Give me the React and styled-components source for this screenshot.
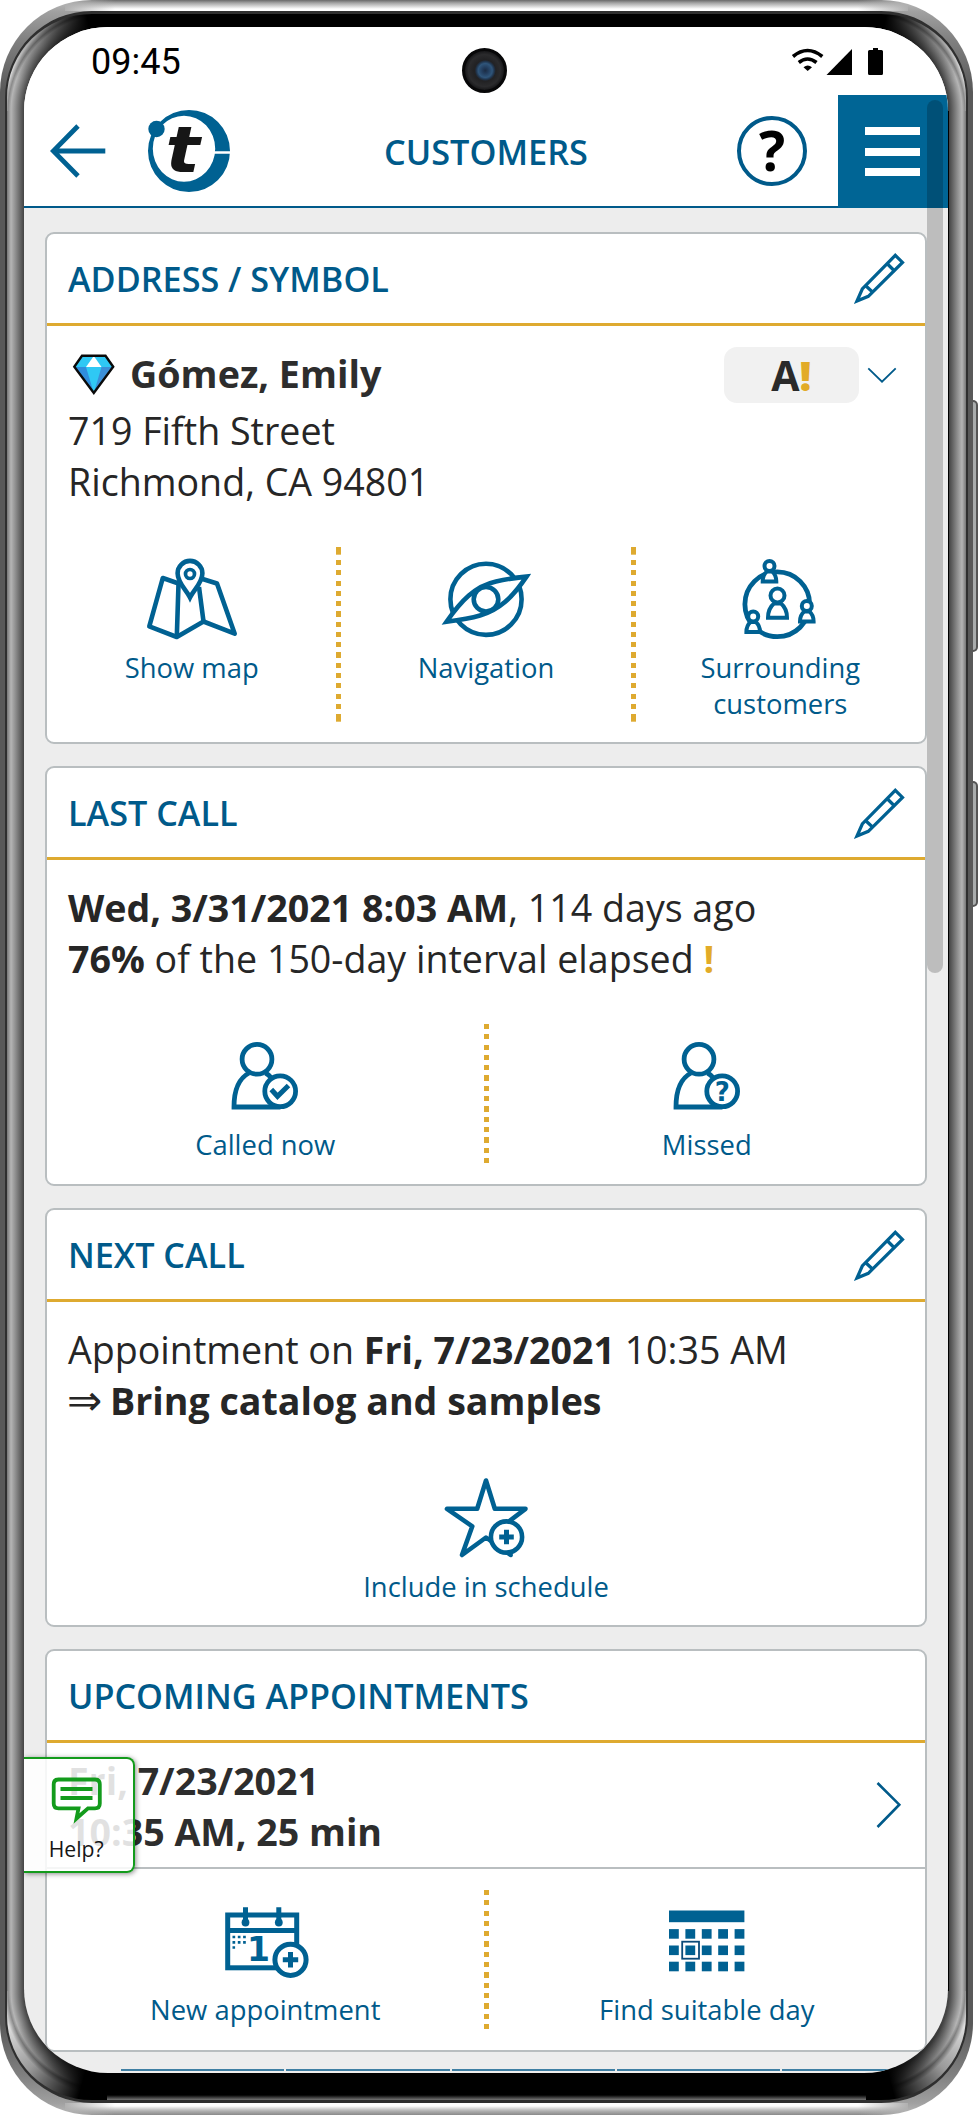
import React from "react";
import styled, { createGlobalStyle, css } from "styled-components";

const BLUE = "#006192";
const TEXT_BLUE = "#005a8a";
const GOLD = "#deaa30";
const GREY = "#b9bec0";

const Pencil = () => (
  <svg width="52" height="54" viewBox="854 252 52 54" fill="none" stroke={BLUE} strokeWidth="3.2">
    <path d="M857 302 862.3 290 895.3 256.3 902.5 263.4 868.3 297.3Z" />
    <path d="M887 264.5 895 272.5M865.5 286.5 873 293.5" />
  </svg>
);

const ShowMapIcon = () => (
  <svg width="92" height="82" viewBox="146 557 92 82" fill="none" stroke={BLUE} strokeWidth="4.6" strokeLinejoin="round">
    <path d="M180 583 162.8 577 149.3 625.3 176.8 636 203.5 620.5 234.7 632.7 217 582.5 201 577.5" />
    <path d="M178.5 583 176.8 636M199 586 203.5 620.5" />
    <path
      d="M190 596.5C186 588.5 177.6 582 177.6 572.3A12.4 12.4 0 0 1 202.4 572.3C202.4 582 194 588.5 190 596.5Z"
      fill="#fff"
      strokeLinejoin="miter"
    />
    <circle cx="190" cy="573" r="4.5" strokeWidth="3.7" />
  </svg>
);

const NavigationIcon = () => (
  <svg width="92" height="82" viewBox="440 557 92 82" fill="none" stroke={BLUE} strokeWidth="4.6">
    <circle cx="486" cy="598.3" r="35.6" />
    <path
      d="M446.5 620.8C461 600 475 585 496 580.5 507 578 517 576.6 526.5 575.6 512 597 499 609 480 614.5 469 617.7 457 619.4 446.5 620.8Z"
      fill="#fff"
    />
    <circle cx="486" cy="598.3" r="12.3" />
  </svg>
);

const SmallPerson = ({ x, y }) => (
  <g transform={`translate(${x} ${y})`}>
    <path d="M-6.8 15.5C-6.8 10-5 7.5-2.5 5.5H2.5C5 7.5 6.8 10 6.8 15.5Z" fill="#fff" />
    <circle r="5" fill="#fff" />
  </g>
);

const SurroundingIcon = () => (
  <svg width="92" height="82" viewBox="734 557 92 82" fill="none" stroke={BLUE} strokeWidth="4">
    <circle cx="777.3" cy="603.3" r="32.4" strokeWidth="4.8" />
    <path d="M768 616.7C768 609 771 605 774 602.5H781C784 605 787 609 787 616.7Z" />
    <circle cx="777.5" cy="594.5" r="7" fill="#fff" />
    <SmallPerson x={769.5} y={565} />
    <SmallPerson x={806.8} y={605} />
    <SmallPerson x={753.2} y={615.5} />
  </svg>
);

const CallIcon = ({ missed }) => (
  <svg width="70" height="70" viewBox="230.5 1041 70 70" fill="none" stroke={BLUE} strokeWidth="4.8">
    <path d="M281 1107H234.5C234.5 1090 240 1078 249.5 1073M266 1073C269 1074.5 271 1076.5 273 1079" />
    <circle cx="257.5" cy="1059.3" r="14.9" />
    <circle cx="280.7" cy="1091.3" r="15.4" fill="#fff" />
    {missed ? (
      <BadgeText x="280.7" y="1101" fontSize="26">?</BadgeText>
    ) : (
      <path d="M271.8 1089.5 278 1096.3 289 1085.5" strokeWidth="5" />
    )}
  </svg>
);

const StarIcon = () => (
  <svg width="86" height="82" viewBox="443 1477 86 82" fill="none" stroke={BLUE} strokeWidth="4.6" strokeLinejoin="round">
    <path d="M486 1480.5 494.8 1508.8H525.5L501 1527.5 510.6 1555 486 1537.5 462 1555 472.3 1526.3 447 1508.8H477.2Z" />
    <circle cx="506.5" cy="1537" r="15.6" fill="#fff" />
    <path d="M499.2 1537H513.8M506.5 1529.7V1544.3" strokeWidth="5" />
  </svg>
);

const NewAppointmentIcon = () => (
  <svg width="88" height="72" viewBox="221.5 1907.5 88 72" fill="none" stroke={BLUE} strokeWidth="5">
    <rect x="228.2" y="1915.5" width="69" height="52.8" />
    <path d="M228 1931H297M246 1907.7V1922M279.3 1907.7V1922" />
    <circle cx="246" cy="1923" r="3.9" fill={BLUE} stroke="none" />
    <circle cx="279.3" cy="1923" r="3.9" fill={BLUE} stroke="none" />
    <path d="M233 1937.5H246.5M233 1942.8H246.5M233 1948H235.6" strokeWidth="2.7" strokeDasharray="2.7 2.6" />
    <BadgeText x="259" y="1961.7" fontSize="33">1</BadgeText>
    <circle cx="291" cy="1960.3" r="15.6" fill="#fff" />
    <path d="M283.3 1960.3H298.7M291 1952.6V1968" />
  </svg>
);

const FindDayIcon = () => (
  <svg width="76" height="72" viewBox="669 1907.5 76 72" fill={BLUE}>
    <rect x="669" y="1911" width="75.4" height="11.7" />
    {[1929.6, 1946, 1962.2].map((y) =>
      [669, 685.4, 701.8, 718.2, 734.6].map((x) => <rect key={`${x}-${y}`} x={x} y={y} width="9.8" height="9.6" />)
    )}
    <rect x="682.2" y="1942.2" width="16.8" height="17" fill="none" stroke="#fff" strokeWidth="4" />
    <rect x="682.2" y="1942.2" width="16.8" height="17" fill="none" stroke="#0b4a78" strokeWidth="1.8" />
  </svg>
);

const Diamond = () => (
  <svg width="44" height="42" viewBox="72.5 353 44 42">
    <path d="M83 354.3H106L114 365.7 94.3 392.5 74.5 365.7Z" fill="#2fc8f4" />
    <path d="M74.5 366H86.5L94.3 392Z" fill="#2f8ddd" />
    <path d="M102 366H114L94.3 392Z" fill="#3b8fd8" />
    <path d="M94.3 355 86.5 366H102Z" fill="#fff" />
    <path d="M82.5 354.8H106L113.7 365.7 94.3 392 74.8 365.7Z" fill="none" stroke="#0a0a0a" strokeWidth="2.4" />
  </svg>
);

const Logo = () => (
  <svg width="84" height="84" viewBox="147 109 84 84">
    <path
      d="M189 110A41 41 0 1 0 189 192 41 41 0 1 0 189 110ZM184 115.7A31.2 33 0 1 1 184 181.7 31.2 33 0 1 1 184 115.7Z"
      fill={BLUE}
      fillRule="evenodd"
    />
    <path d="M214 152.5H231" stroke="#fff" strokeWidth="2.6" />
    <circle cx="156.5" cy="129" r="8.2" fill={BLUE} />
    <LogoText transform="translate(165.5 171.5) scale(1.16 1.02)">t</LogoText>
  </svg>
);

const StatusIcons = () => (
  <svg width="94" height="30" viewBox="791 47 94 30">
    <path d="M793 56.5Q807.5 44.5 822.3 56.5M798.8 62.5Q807.5 55.5 816.5 62.5" fill="none" stroke="#000" strokeWidth="3.6" />
    <path d="M803.5 67.3Q807.7 63.5 812 67.3L807.7 71Z" />
    <path d="M826.5 75 852 49V75Z" />
    <path d="M873 48H878V50H881.5Q883 50 883 51.5V73.5Q883 75 881.5 75H869.5Q868 75 868 73.5V51.5Q868 50 869.5 50H873Z" />
  </svg>
);

const Action = ({ icon, children }) => (
  <ActionButton>
    {icon}
    <span>{children}</span>
  </ActionButton>
);

const CardHead = ({ title, editable = true }) => (
  <CardHeader>
    <CardTitle>{title}</CardTitle>
    {editable && <Pencil />}
  </CardHeader>
);

const App = () => {
  return (
    <Page>
      <GlobalStyle />
      <Frame>
        <Bezel>
          <Screen>
            <StatusBar>
              <Clock>09:45</Clock>
              <StatusIcons />
              <Camera />
            </StatusBar>
            <Toolbar>
              <ToolbarLeft>
                <svg width="56" height="54" viewBox="50 123.5 56 54" fill="none" stroke={BLUE} strokeWidth="4.8">
                  <path d="M105.3 150.5H53M78 125.5 53.3 150.5 78 175.5" />
                </svg>
                <Logo />
              </ToolbarLeft>
              <PageTitle>CUSTOMERS</PageTitle>
              <ToolbarRight>
                <HelpCircle>?</HelpCircle>
                <MenuButton>
                  <i />
                  <i />
                  <i />
                </MenuButton>
              </ToolbarRight>
            </Toolbar>

            <Content>
              <Card>
                <CardHead title="ADDRESS / SYMBOL" />
                <NameRow>
                  <Diamond />
                  <Name>Gómez, Emily</Name>
                  <Rating>
                    A<Mark>!</Mark>
                  </Rating>
                  <svg width="30" height="16" viewBox="867 367 30 16" fill="none" stroke={TEXT_BLUE} strokeWidth="1.8">
                    <path d="M868.3 368.3 882 381.7 895.7 368.3" />
                  </svg>
                </NameRow>
                <CardText $top={1}>
                  719 Fifth Street
                  <br />
                  Richmond, CA 94801
                </CardText>
                <Actions $top={40} $gap={10}>
                  <Action icon={<ShowMapIcon />}>Show map</Action>
                  <Divider $tall />
                  <Action icon={<NavigationIcon />}>Navigation</Action>
                  <Divider $tall />
                  <Action icon={<SurroundingIcon />}>
                    Surrounding
                    <br />
                    customers
                  </Action>
                </Actions>
              </Card>

              <Card>
                <CardHead title="LAST CALL" />
                <CardText $top={21.5}>
                  <b>Wed, 3/31/2021 8:03 AM</b>, 114 days ago
                  <br />
                  <b>76%</b> of the 150-day interval elapsed <Mark>!</Mark>
                </CardText>
                <Actions $top={39.5} $pad={17} $gap={16.5}>
                  <Action icon={<CallIcon />}>Called now</Action>
                  <Divider />
                  <Action icon={<CallIcon missed />}>Missed</Action>
                </Actions>
              </Card>

              <Card>
                <CardHead title="NEXT CALL" />
                <CardText $top={21.3}>
                  Appointment on <b>Fri, 7/23/2021</b> 10:35 AM
                  <br />
                  <Implies>⇒</Implies> <b>Bring catalog and samples</b>
                </CardText>
                <Actions $top={39.7} $gap={10}>
                  <Action icon={<StarIcon />}>Include in schedule</Action>
                </Actions>
              </Card>

              <Card>
                <CardHead title="UPCOMING APPOINTMENTS" editable={false} />
                <AppointmentRow>
                  <b>
                    Fri, 7/23/2021
                    <br />
                    10:35 AM, 25 min
                  </b>
                  <svg width="26" height="48" viewBox="877 1781.5 26 48" fill="none" stroke={TEXT_BLUE} strokeWidth="2.6">
                    <path d="M878.5 1783.5 900.3 1805.2 878.5 1827.5" />
                  </svg>
                </AppointmentRow>
                <Actions $top={21} $pad={17} $gap={12.5}>
                  <Action icon={<NewAppointmentIcon />}>New appointment</Action>
                  <Divider />
                  <Action icon={<FindDayIcon />}>Find suitable day</Action>
                </Actions>
              </Card>

              <TabStrip>
                <i />
                <i />
                <i />
                <i />
                <i />
              </TabStrip>
            </Content>

            <HelpTab>
              <svg width="52" height="47" viewBox="50.5 1778 52 47" fill="none" stroke="#139b1c" strokeWidth="3.8">
                <path d="M59 1780.5H95.5Q100.3 1780.5 100.3 1785.3V1804.5Q100.3 1809.3 95.5 1809.3H88.5L77 1819.5 79 1809.3H59Q54.2 1809.3 54.2 1804.5V1785.3Q54.2 1780.5 59 1780.5Z" />
                <path d="M61 1790H93M61 1799H93" />
              </svg>
              Help?
            </HelpTab>
            <Scrollbar />
          </Screen>
        </Bezel>
      </Frame>
      <SideButtons>
        <SideButton $height={252} />
        <SideButton $height={126} />
      </SideButtons>
    </Page>
  );
};

export default App;

const GlobalStyle = createGlobalStyle`
  *, *::before, *::after {
    box-sizing: border-box;
  }

  body {
    margin: 0;
    background: #fff;
    font-family: "Open Sans", sans-serif;
  }

  svg {
    display: block;
    flex: none;
  }
`;

const Page = styled.div`
  display: flex;
  width: 978px;
  height: 2115px;
  overflow: hidden;
`;

/* polished metal edge of the phone */
const Frame = styled.div`
  width: 973px;
  height: 2115px;
  padding: 11px 5px 12px;
  border-radius: 92px;
  background:
    linear-gradient(90deg, #b0b0b0, rgba(176, 176, 176, 0)) 65px 0 / 50px 11px no-repeat,
    linear-gradient(270deg, #b0b0b0, rgba(176, 176, 176, 0)) calc(100% - 65px) 0 / 50px 11px no-repeat,
    linear-gradient(90deg, #b0b0b0, rgba(176, 176, 176, 0)) 65px 100% / 50px 12px no-repeat,
    linear-gradient(270deg, #b0b0b0, rgba(176, 176, 176, 0)) calc(100% - 65px) 100% / 50px 12px no-repeat,
    linear-gradient(#6a6a6a, #a5a5a5 3px, #fff 9px, #fff 11px) 50% 0 / calc(100% - 130px) 11px no-repeat,
    linear-gradient(#fff, #fff 3px, #b0b0b0 8px, #8a8a8a 12px) 50% 100% / calc(100% - 130px) 12px no-repeat,
    linear-gradient(#bbb 0, #a0a0a0 12px, #808080 40px, #595959 90px, #595959 calc(100% - 90px), #808080 calc(100% - 40px), #a0a0a0 calc(100% - 12px), #bbb);
`;

const Bezel = styled.div`
  height: 100%;
  padding: 13px 17px 25px;
  border: solid #2f2f2f;
  border-width: 3px 2px;
  border-radius: 87px;
  background:
    conic-gradient(from 270deg at 100% 100%, transparent 20deg, rgba(0, 0, 0, 0.3) 45deg, #000 78deg) 0 0 / 100px 97px no-repeat,
    conic-gradient(from 0deg at 0 100%, #000 12deg, rgba(0, 0, 0, 0.3) 45deg, transparent 70deg) 100% 0 / 100px 97px no-repeat,
    conic-gradient(from 180deg at 100% 0, #000 15deg, rgba(0, 0, 0, 0.3) 45deg, transparent 70deg) 0 100% / 100px 109px no-repeat,
    conic-gradient(from 90deg at 0 0, transparent 20deg, rgba(0, 0, 0, 0.3) 45deg, #000 75deg) 100% 100% / 100px 109px no-repeat,
    radial-gradient(circle at 100% 100%, #444 83px, #8a8a8a 91px, #b5b5b5 96px, #8a8a8a 99px, #ddd 103px) 0 0 / 100px 97px no-repeat,
    radial-gradient(circle at 0 100%, #444 83px, #8a8a8a 91px, #b5b5b5 96px, #8a8a8a 99px, #ddd 103px) 100% 0 / 100px 97px no-repeat,
    radial-gradient(circle at 100% 0, #444 83px, #8a8a8a 91px, #b5b5b5 96px, #8a8a8a 99px, #ddd 104px) 0 100% / 100px 109px no-repeat,
    radial-gradient(circle at 0 0, #444 83px, #8a8a8a 91px, #b5b5b5 96px, #8a8a8a 99px, #ddd 104px) 100% 100% / 100px 109px no-repeat,
    linear-gradient(90deg, #777, #b5b5b5 4px, #8a8a8a 9px, #444 17px) 0 0 / 17px 100% no-repeat,
    linear-gradient(270deg, #777, #b5b5b5 4px, #8a8a8a 9px, #444 17px) 100% 0 / 17px 100% no-repeat,
    linear-gradient(#000, #777 5px) 0 100% / 100% 5px no-repeat,
    #000;
`;

const Screen = styled.div`
  position: relative;
  display: flex;
  flex-direction: column;
  width: 924px;
  height: 2046px;
  overflow: hidden;
  border-radius: 84px;
  background: #ededed;
`;

const StatusBar = styled.div`
  position: relative;
  display: flex;
  flex: none;
  align-items: flex-start;
  justify-content: space-between;
  height: 68px;
  padding: 20px 63px 0 67px;
  background: #fff;
`;

const Clock = styled.div`
  margin-top: -6px;
  font: 36px/42px Roboto, sans-serif;
  color: #000;
`;

const Camera = styled.div`
  position: absolute;
  top: 21px;
  left: 438px;
  width: 45px;
  height: 45px;
  border: 3px solid #070708;
  border-radius: 50%;
  background:
    radial-gradient(circle at 52% 50%, #1b2c44 0, #223c5c 3px, #2f557a 7px, #20344c 9px, transparent 10.5px),
    radial-gradient(circle, #222224 11px, #2b2b2d 16px, #151517 20px);
`;

const Toolbar = styled.div`
  display: grid;
  flex: none;
  grid-template-columns: 1fr auto 1fr;
  align-items: center;
  height: 113px;
  border-bottom: 2.5px solid ${TEXT_BLUE};
  background: #fff;
`;

const ToolbarLeft = styled.div`
  display: flex;
  align-items: center;
  gap: 41px;
  padding-left: 26px;
`;

const PageTitle = styled.h1`
  margin: 2px 0 0;
  font-size: 34.3px;
  font-weight: 600;
  line-height: 48px;
  color: ${TEXT_BLUE};
`;

const ToolbarRight = styled.div`
  display: flex;
  align-items: center;
  justify-content: flex-end;
  gap: 31px;
`;

const HelpCircle = styled.div`
  width: 70px;
  height: 70px;
  border: 4px solid ${TEXT_BLUE};
  border-radius: 50%;
  font-size: 55px;
  font-weight: 700;
  line-height: 60px;
  text-align: center;
  color: #000;
`;

const MenuButton = styled.div`
  display: flex;
  flex-direction: column;
  align-items: flex-start;
  justify-content: center;
  gap: 12.6px;
  width: 110px;
  height: 113px;
  margin-bottom: -2.5px;
  padding-left: 27px;
  background: #006595;

  i {
    width: 55px;
    height: 8px;
    background: #fff;
  }
`;

const Content = styled.main`
  display: flex;
  flex: 1;
  flex-direction: column;
  gap: 22px;
  padding: 23.5px 21px 0;
`;

const Card = styled.section`
  flex: none;
  border: 2px solid ${GREY};
  border-radius: 9px;
  background: #fff;
`;

const CardHeader = styled.div`
  display: flex;
  align-items: center;
  justify-content: space-between;
  height: 92.5px;
  padding: 0 19px 0 21px;
  border-bottom: 3px solid ${GOLD};
`;

const CardTitle = styled.h2`
  margin: 1px 0 0;
  font-size: 34.2px;
  font-weight: 600;
  line-height: 48px;
  color: ${TEXT_BLUE};
`;

const NameRow = styled.div`
  display: flex;
  align-items: center;
  height: 77.5px;
  padding: 20.5px 28px 0 24.5px;
`;

const Name = styled.div`
  flex: 1;
  margin: -3px 0 0 14.5px;
  font-size: 37.7px;
  font-weight: 700;
  line-height: 52px;
  color: #2d2d2d;
`;

const Rating = styled.div`
  width: 135.5px;
  height: 56.5px;
  margin-right: 8px;
  border-radius: 13px;
  background: #f1f1f1;
  font-size: 41px;
  font-weight: 700;
  line-height: 56px;
  text-align: center;
  color: #2a2a2a;
`;

const Mark = styled.b`
  color: #e2ab28;
`;

const CardText = styled.div`
  padding: ${(p) => p.$top}px 21px 0;
  font-size: 37.6px;
  line-height: 51.2px;
  white-space: nowrap;
  color: #262626;
`;

const Implies = styled.span`
  margin: 0 -2px 0 -1px;
  font-family: "DejaVu Sans", sans-serif;
  font-size: 42px;
  line-height: 1;
`;

const AppointmentRow = styled.div`
  display: flex;
  align-items: center;
  justify-content: space-between;
  height: 126px;
  padding: 0 23px 0 21px;
  border-bottom: 2px solid ${GREY};
  font-size: 37.6px;
  line-height: 51.2px;
  color: #2d2d2d;

  b {
    margin-top: 2px;
  }
`;

const Actions = styled.div`
  display: flex;
  margin-top: ${(p) => p.$top}px;
  padding-bottom: 20px;

  & > button {
    padding-top: ${(p) => p.$pad ?? 11}px;
    gap: ${(p) => p.$gap}px;
  }
`;

const ActionButton = styled.button`
  display: flex;
  flex: 1 1 0;
  flex-direction: column;
  align-items: center;
  min-width: 0;
  padding: 0;
  border: 0;
  background: none;
  font: 27.4px/36px "Open Sans", sans-serif;
  color: ${TEXT_BLUE};
`;

const Divider = styled.div`
  flex: none;
  width: 5px;
  height: ${(p) => (p.$tall ? 175 : 140)}px;
  background: repeating-linear-gradient(${GOLD} 0 5.2px, transparent 5.2px 10.3px);

  ${(p) =>
    p.$tall &&
    css`
      background:
        linear-gradient(${GOLD}, ${GOLD}) 0 0 / 100% 7.7px no-repeat,
        linear-gradient(${GOLD}, ${GOLD}) 0 100% / 100% 7.7px no-repeat,
        repeating-linear-gradient(${GOLD} 0 5.2px, transparent 5.2px 10.27px) 0 13px / 100% 150px no-repeat;
    `}
`;

const TabStrip = styled.div`
  display: flex;
  flex: none;
  gap: 2px;
  height: 6px;
  margin: -5px -21px 0;
  padding-left: 97px;
  border-bottom: 2px solid #f6f6f6;

  i {
    width: 163.3px;
    height: 1.5px;
    background: #3f7fa3;
  }
`;

const HelpTab = styled.div`
  position: absolute;
  top: 1729.5px;
  left: 0;
  display: flex;
  flex-direction: column;
  align-items: center;
  width: 110.5px;
  height: 116px;
  padding: 18px 4px 0 0;
  border: solid #139b1c;
  border-width: 2.6px 2.6px 2.6px 0;
  border-radius: 0 8px 8px 0;
  background: rgba(255, 255, 255, 0.86);
  box-shadow: 1px 1px 5px rgba(0, 0, 0, 0.45);
  font-size: 21.2px;
  line-height: 50px;
  color: #161616;
`;

const Scrollbar = styled.div`
  position: absolute;
  top: 73px;
  right: 5px;
  width: 16px;
  height: 873px;
  border-radius: 8px;
  background: rgba(0, 0, 0, 0.2);
`;

const SideButtons = styled.div`
  display: flex;
  flex-direction: column;
  gap: 129px;
  width: 5px;
  padding-top: 400px;
`;

const SideButton = styled.div`
  height: ${(p) => p.$height}px;
  border: 2px solid #555;
  border-left: 0;
  border-radius: 0 5px 5px 0;
  background: #a9acac;
`;

const BadgeText = styled.text`
  font-family: "DejaVu Sans", sans-serif;
  font-weight: 700;
  text-anchor: middle;
  fill: ${BLUE};
  stroke: none;
`;

const LogoText = styled.text`
  font: italic 700 62px "DejaVu Sans", sans-serif;
  fill: #161616;
`;
